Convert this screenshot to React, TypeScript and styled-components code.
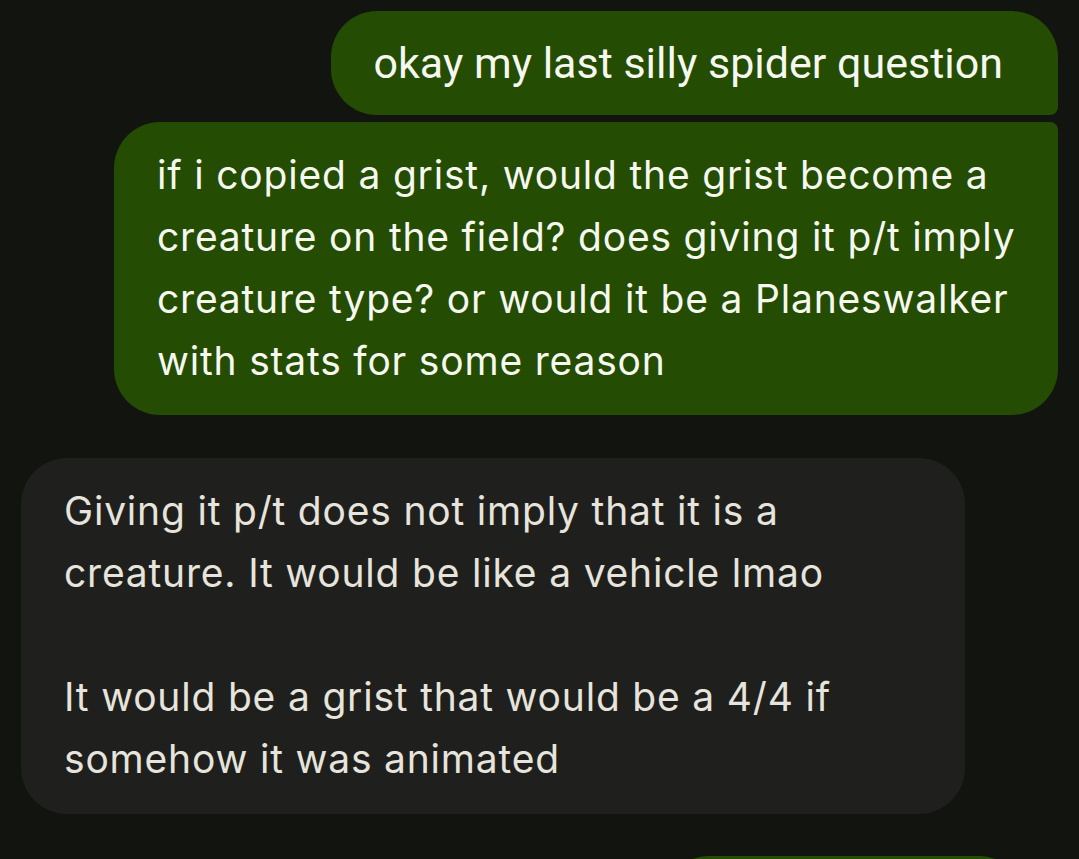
import styled, { createGlobalStyle } from 'styled-components'

const GlobalStyle = createGlobalStyle`
    html, body {
        margin: 0;
        padding: 0;
        background: #121410;
        overflow: hidden;
    }
`

type Side = 'sent' | 'received'
type Shape = 'first' | 'middle' | 'last' | 'single'

type Message = {
    id: number
    side: Side
    shape: Shape
    short?: boolean
    lines: string[]
}

const messages: Message[] = [
    { id: 1, side: 'sent', shape: 'first', short: true, lines: ['okay my last silly spider question'] },
    {
        id: 2,
        side: 'sent',
        shape: 'last',
        lines: [
            'if i copied a grist, would the grist become a creature on the field? does giving it p/t imply creature type? or would it be a Planeswalker with stats for some reason',
        ],
    },
    {
        id: 3,
        side: 'received',
        shape: 'single',
        lines: [
            'Giving it p/t does not imply that it is a creature. It would be like a vehicle lmao',
            '',
            'It would be a grist that would be a 4/4 if somehow it was animated',
        ],
    },
]

const BIG = 46
const SMALL = 8

const radius = (side: Side, shape: Shape) => {
    if (shape === 'single') return `${BIG}px`
    const top = shape === 'first' ? BIG : SMALL
    const bottom = shape === 'last' ? BIG : SMALL
    if (side === 'sent') return `${BIG}px ${top}px ${bottom}px ${BIG}px`
    return `${top}px ${BIG}px ${BIG}px ${bottom}px`
}

const Thread = styled.main`
    display: flex;
    flex-direction: column;
    padding: 11px 21px 0;
    height: 859px;
    box-sizing: border-box;
    overflow: hidden;
`

const Row = styled.div<{ $side: Side; $gap: number }>`
    display: flex;
    justify-content: ${(p) => (p.$side === 'sent' ? 'flex-end' : 'flex-start')};
    margin-top: ${(p) => p.$gap}px;
    flex-shrink: 0;
`

const Bubble = styled.div<{ $side: Side; $shape: Shape; $short?: boolean }>`
    max-width: 944px;
    box-sizing: border-box;
    padding: ${(p) =>
        p.$short ? '21px 55px 21px 43px' : p.$side === 'received' ? '22px 42px 24px 43px' : '22px 42px 23px 43px'};
    border-radius: ${(p) => radius(p.$side, p.$shape)};
    background: ${(p) => (p.$side === 'sent' ? '#244c02' : '#1f201d')};
    color: ${(p) => (p.$side === 'sent' ? '#f6f8f0' : '#e6e4dc')};
    font-family: ${(p) => (p.$short ? "Roboto, 'Liberation Sans', sans-serif" : "Inter, Roboto, sans-serif")};
    font-size: ${(p) => (p.$short ? '43px' : '39px')};
    letter-spacing: ${(p) => (p.$short ? '0' : '0.8px')};
    line-height: 62px;
`

const Stub = styled.div`
    width: 352px;
    height: 80px;
    border-radius: ${BIG}px ${BIG}px ${SMALL}px ${BIG}px;
    background: #244c02;
    margin-right: 38px;
`

const Line = styled.p`
    margin: 0;
    min-height: 62px;
`

const App = () => {
    return (
        <>
            <GlobalStyle />
            <Thread>
                {messages.map((m, i) => {
                    const prev = messages[i - 1]
                    const gap = !prev ? 0 : prev.side === m.side ? 7 : 43
                    return (
                        <Row key={m.id} $side={m.side} $gap={gap}>
                            <Bubble $side={m.side} $shape={m.shape} $short={m.short}>
                                {m.lines.map((l, j) => (
                                    <Line key={j}>{l}</Line>
                                ))}
                            </Bubble>
                        </Row>
                    )
                })}
                <Row $side="sent" $gap={42}>
                    <Stub />
                </Row>
            </Thread>
        </>
    )
}

export default App
